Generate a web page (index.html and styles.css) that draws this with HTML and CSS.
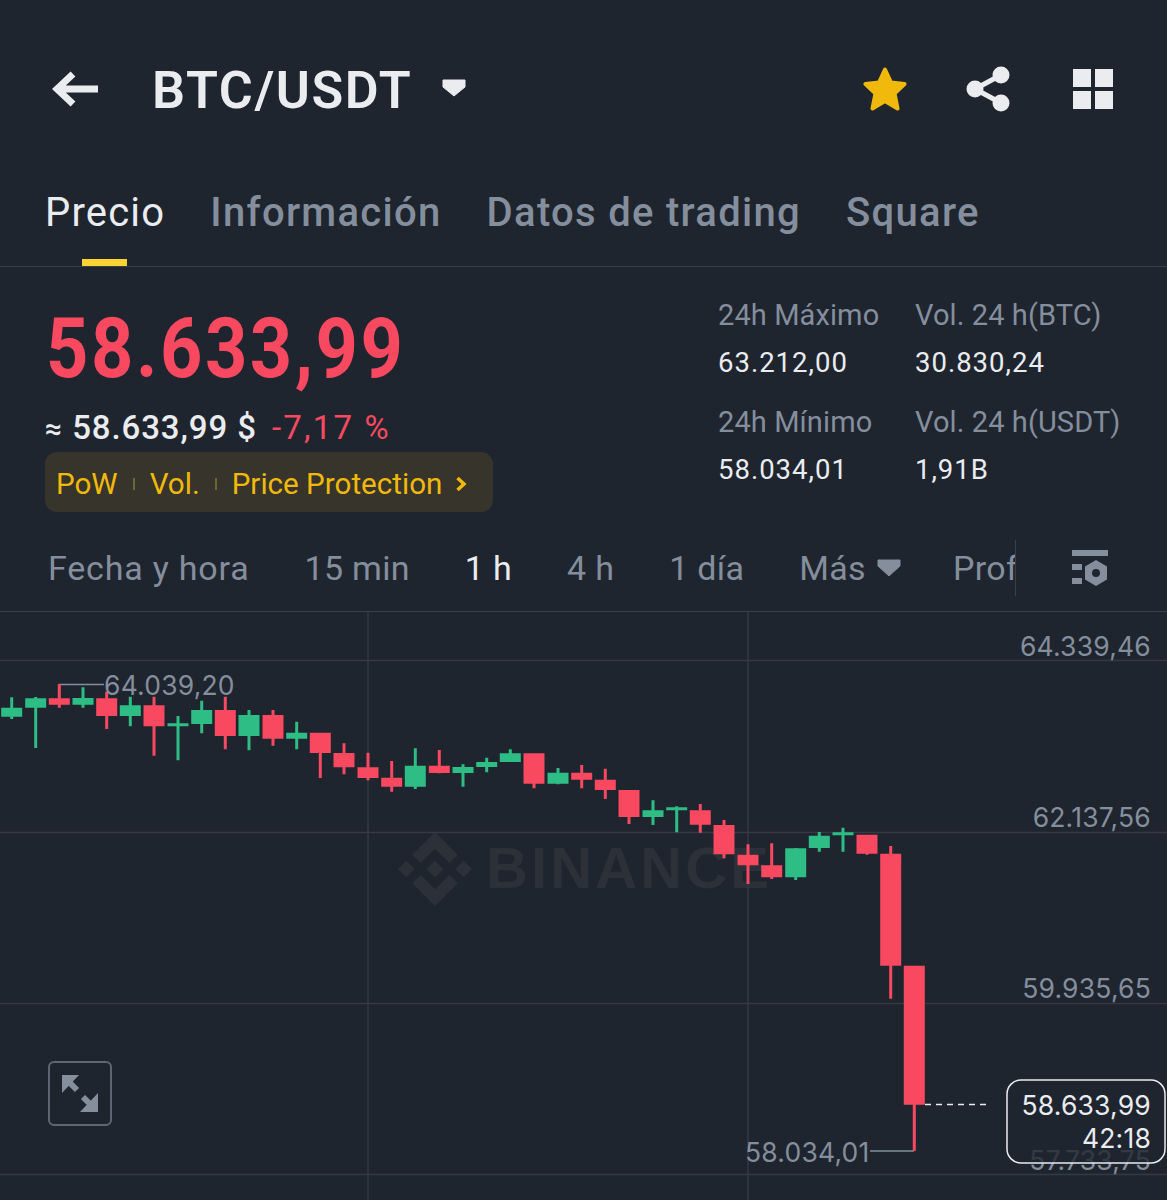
FILE: index.html
```html
<!DOCTYPE html>
<html lang="es">
<head>
<meta charset="utf-8">
<title>BTC/USDT</title>
<link rel="stylesheet" href="styles.css">
</head>
<body>
<main class="app">
  <header class="topbar">
    <svg class="back" viewBox="0 0 46 36" width="46" height="36"><path d="M46 18H6M21 3 5 18l16 15" fill="none" stroke="#eaecef" stroke-width="7"/></svg>
    <h1 class="pair">BTC/USDT</h1>
    <svg class="pair-caret" viewBox="0 0 24 18" width="24" height="18"><path d="M1 1h22v7L12 17 1 8z" fill="#eaecef" stroke="#eaecef" stroke-linejoin="round"/></svg>
    <div class="top-actions">
      <svg viewBox="0 0 44 45" width="44" height="45"><path d="M22 2.500 28 15.500 41.500 17 31.500 26.500 34.500 41.500 22 34 9.500 41.500 12.500 26.500 2.500 17 16 15.500z" fill="#f0b90b" stroke="#f0b90b" stroke-width="4" stroke-linejoin="round"/></svg>
      <svg class="share" viewBox="0 0 44 46" width="44" height="46"><path d="M35 9 9 23l26 14" fill="none" stroke="#eaecef" stroke-width="5"/><circle cx="35" cy="9" r="8.500" fill="#eaecef"/><circle cx="9" cy="23" r="8.500" fill="#eaecef"/><circle cx="35" cy="37" r="8.500" fill="#eaecef"/></svg>
      <svg class="apps" viewBox="0 0 40 40" width="40" height="40"><path d="M0 0h18v18H0zM22 0h18v18H22zM0 22h18v18H0zM22 22h18v18H22z" fill="#eaecef"/></svg>
    </div>
  </header>

  <nav class="tabs">
    <a class="tab tab-active">Precio</a>
    <a class="tab">Información</a>
    <a class="tab">Datos de trading</a>
    <a class="tab">Square</a>
  </nav>

  <section class="market">
    <div class="quote">
      <div class="price">58.633,99</div>
      <div class="fiat"><span class="approx">≈</span> 58.633,99 $ <span class="change">-7,17 %</span></div>
      <div class="tags">
        <span>PoW</span><i class="tag-sep"></i><span>Vol.</span><i class="tag-sep"></i><span>Price Protection</span>
        <svg class="tag-arrow" viewBox="0 0 12 16" width="12" height="16"><path d="M2.500 2 9 8l-6.500 6" fill="none" stroke="#f0b90b" stroke-width="3.500"/></svg>
      </div>
    </div>
    <dl class="stats">
      <div class="stat stat-a"><dt>24h Máximo</dt><dd>63.212,00</dd></div>
      <div class="stat stat-b"><dt>Vol. 24 h(BTC)</dt><dd>30.830,24</dd></div>
      <div class="stat stat-a"><dt>24h Mínimo</dt><dd>58.034,01</dd></div>
      <div class="stat stat-b"><dt>Vol. 24 h(USDT)</dt><dd>1,91B</dd></div>
    </dl>
  </section>

  <div class="intervals">
    <div class="interval-list">
      <span class="interval-first">Fecha y hora</span>
      <span>15 min</span>
      <span class="interval-active">1 h</span>
      <span>4 h</span>
      <span>1 día</span>
      <span class="more">Más<svg viewBox="0 0 24 18" width="24" height="18"><path d="M1 1h22v6L12 17 1 7z" fill="#848e9c" stroke="#848e9c" stroke-linejoin="round"/></svg></span>
      <span class="clip">Prof</span>
    </div>
    <svg class="chart-settings" viewBox="0 0 36 36" width="36" height="36"><path d="M0 0h36v6H0zM0 14h10v6H0zM0 28h10v6H0z" fill="#848e9c"/><path fill-rule="evenodd" d="M24 10l11 6.500v13L24 36l-11-6.500v-13zM24 19a4 4 0 1 0 0 8 4 4 0 0 0 0-8z" fill="#848e9c"/></svg>
  </div>

  <section class="chart">
    <svg class="chart-svg" viewBox="0 612 1167 588" width="1167" height="588">
      <svg class="wm-logo" x="398" y="832" width="74" height="74" viewBox="0 0 126.610 126.610"><path d="M38.730 53.200 63.320 28.620 87.920 53.220 102.220 38.910 63.320 0 24.430 38.900zM0 63.310 14.300 49.010 28.610 63.310 14.300 77.610zM63.310 48.980 77.830 63.300 63.320 77.820 48.800 63.300zM98.010 63.310 112.310 49.010 126.610 63.310 112.310 77.610zM87.910 73.400 63.320 98 38.730 73.410 24.410 87.710 63.320 126.610 102.220 87.700z"/></svg>
      <text class="wm-text" x="486" y="888">BINANCE</text>
      <path class="grid" d="M0 660.500H1167M0 832.500H1167M0 1003.500H1167M0 1174.500H1167M368 612V1200M748 612V1200"/>
      <text class="axis" x="1151" y="656">64.339,46</text>
      <text class="axis" x="1151" y="827">62.137,56</text>
      <text class="axis" x="1151" y="998">59.935,65</text>
      <text class="axis" x="1151" y="1170">57.733,75</text>
      <path class="marker" d="M59 684.500H104M870 1151H914"/>
      <path class="up" d="M10.200 697.300h3v21.700h-3zM1.200 707.700h21v9h-21zM34.200 697h3v51h-3zM25.200 698.300h21v9.400h-21zM81.500 687.300h3v20.400h-3zM72.500 698h21v6.700h-21zM128.800 696.700h3v29.600h-3zM119.800 705.300h21v10.700h-21zM176.500 716h3v44.300h-3zM167.500 723.300h21v3h-21zM200.200 700.700h3v32.600h-3zM191.200 710h21v14h-21zM247.500 710h3v40.300h-3zM238.500 715h21v21h-21zM295.200 721.700h3v27.600h-3zM286.200 732.700h21v6h-21zM413.800 748.300h3v40.700h-3zM404.800 765.700h21v21h-21zM461.500 764.300h3v22.400h-3zM452.500 767h21v6h-21zM485.200 757.700h3v14.600h-3zM476.200 762h21v5h-21zM508.800 749.300h3v12.700h-3zM499.800 753.300h21v8.700h-21zM556.500 768h3v16.300h-3zM547.500 772.700h21v11h-21zM651.500 800.300h3v24.700h-3zM642.500 810.300h21v6.700h-21zM675.200 806.300h3v26h-3zM666.200 807.300h21v3h-21zM794.200 848h3v32h-3zM785.200 848.300h21v29h-21zM817.800 832h3v19.700h-3zM808.800 835.700h21v12.300h-21zM841.500 827.700h3v24h-3zM832.500 832.300h21v3h-21z"/>
      <path class="down" d="M57.800 684h3v23.700h-3zM48.800 698.300h21v6.400h-21zM105.200 691.700h3v37.300h-3zM96.200 698.300h21v17.700h-21zM152.500 696.700h3v59h-3zM143.500 705.300h21v21h-21zM223.800 696.700h3v52.600h-3zM214.800 710h21v26h-21zM271.500 710h3v35.700h-3zM262.500 715h21v23.700h-21zM318.800 732.700h3v45.300h-3zM309.800 732.700h21v20.300h-21zM342.500 743.300h3v31h-3zM333.500 753h21v14.300h-21zM366.500 752.700h3v27.600h-3zM357.500 767.300h21v10.700h-21zM390.200 761h3v30.700h-3zM381.200 777.700h21v9h-21zM437.800 750h3v23.300h-3zM428.800 765.700h21v7.300h-21zM532.500 753.300h3v35h-3zM523.500 753.300h21v30.400h-21zM580.200 765h3v23.300h-3zM571.200 772.700h21v7h-21zM603.800 768.700h3v30.300h-3zM594.800 779.700h21v10.300h-21zM627.500 790h3v34h-3zM618.500 790h21v27h-21zM698.800 804h3v28.700h-3zM689.800 810.300h21v14.400h-21zM722.500 820h3v38.300h-3zM713.500 825h21v29.300h-21zM746.500 844.300h3v39.700h-3zM737.500 854.700h21v10.600h-21zM770.200 843.300h3v35.700h-3zM761.200 865.300h21v12h-21zM865.500 834.700h3v20h-3zM856.500 834.700h21v19h-21zM889.200 846h3v152.700h-3zM880.200 853.700h21v112h-21zM912.800 965.700h3v185.300h-3zM903.800 965.700h21v139h-21z"/>
      <text class="extreme" x="104" y="695">64.039,20</text>
      <text class="extreme" x="745" y="1162">58.034,01</text>
      <path class="last-line" d="M925 1104.500H991"/>
      <rect class="last-box" x="1007" y="1080" width="158" height="83" rx="14"/>
      <text class="last-text" x="1151" y="1115">58.633,99</text>
      <text class="last-text" x="1151" y="1148">42:18</text>
    </svg>
    <button class="expand" aria-label="Expand">
      <svg viewBox="0 0 36 37" width="36" height="37"><path d="M0 0h17L0 18zM36 37H18L36 18z" fill="#848e9c"/><path d="M8 8l7 7M21 22l7 7" stroke="#848e9c" stroke-width="6" fill="none"/></svg>
    </button>
  </section>
</main>
</body>
</html>
```

FILE: styles.css
```css
* { box-sizing: border-box; }
html, body { margin: 0; padding: 0; background: #1f252f; }
body { width: 1167px; height: 1200px; overflow: hidden; font-family: "Roboto", "Noto Sans", sans-serif; color: #eaecef; }
.app { display: flex; flex-direction: column; height: 1200px; }

.topbar { display: flex; align-items: center; height: 98px; margin-top: 40px; padding: 0 54px 0 52px; }
.back { flex: none; }
.pair { margin: 3px 0 0 54px; font-size: 52px; font-weight: 600; line-height: 98px; letter-spacing: 1.600px; }
.pair-caret { margin: 0 0 2px 30px; }
.top-actions { display: flex; align-items: center; margin-left: auto; gap: 59px; }
.top-actions .apps { margin-left: 4px; }

.tabs { display: flex; height: 129px; padding: 36px 0 0 45px; gap: 45px; border-bottom: 1px solid #3a404b; }
.tab { position: relative; height: 92px; font-size: 40px; font-weight: 500; line-height: 78px; color: #848e9c; letter-spacing: 1.300px; }
.tab-active { color: #eaecef; font-weight: 400; letter-spacing: 1.200px; }
.tab-active::after { content: ""; position: absolute; left: 37px; width: 45px; bottom: 0; height: 7px; background: #fcd535; }

.market { display: flex; justify-content: space-between; height: 258px; padding: 0 46px 0 45px; }
.price { font-size: 84px; font-weight: 700; line-height: 100px; margin: 32px 0 0 1px; color: #f84960; letter-spacing: 2.900px; transform: scaleX(.88); transform-origin: left center; white-space: nowrap; }
.fiat { margin-top: 7px; font-size: 33px; font-weight: 500; line-height: 44px; white-space: nowrap; letter-spacing: .9px; }
.approx { font-size: 30px; }
.change { margin-left: 6px; color: #f84960; font-weight: 400; letter-spacing: 2.200px; }
.tags { display: flex; align-items: center; margin-top: 1px; width: 448px; height: 60px; padding: 3px 0 0 11px; background: #37342b; border-radius: 12px; color: #f0b90b; font-size: 29.600px; }
.tag-sep { width: 2px; height: 12px; margin: 0 15px; background: #6e6636; }
.tag-arrow { margin-left: 13px; }

.stats { display: grid; grid-template-columns: 197px 206px; margin: 0; padding-top: 26px; grid-auto-rows: 107px; }
.stat dt { font-size: 29px; line-height: 44px; color: #848e9c; white-space: nowrap; letter-spacing: .1px; }
.stat dd { margin: 4px 0 0; font-size: 27.500px; line-height: 44px; white-space: nowrap; letter-spacing: 1px; }

.intervals { display: flex; align-items: center; height: 87px; padding: 0 0 0 48px; border-bottom: 1px solid #3a404b; }
.interval-list { display: flex; align-items: center; gap: 55px; font-size: 34px; color: #848e9c; width: 968px; white-space: nowrap; overflow: hidden; height: 56px; border-right: 1px solid #3a404b; letter-spacing: .3px; }
.interval-first { letter-spacing: .8px; }
.interval-active { color: #eaecef; }
.more { display: flex; align-items: center; gap: 11px; }
.clip { margin-left: -3px; }
.chart-settings { margin: 0 0 0 56px; }

.chart { position: relative; flex: 1; overflow: hidden; }
.chart-svg { display: block; }
.grid { stroke: #343a45; stroke-width: 1.500; fill: none; }
.up { fill: #2ebd85; }
.down { fill: #f84960; }
.marker { stroke: #848e9c; stroke-width: 1.500; fill: none; }
.axis { font-family: "Inter", sans-serif; font-size: 26.500px; fill: #848e9c; text-anchor: end; letter-spacing: .2px; }
.extreme { font-family: "Inter", sans-serif; font-size: 26.500px; fill: #848e9c; letter-spacing: .2px; }
.wm-logo { fill: #2b3039; }
.wm-text { font-family: "Liberation Sans", sans-serif; font-weight: 700; font-size: 58px; fill: #2b3039; letter-spacing: 3.100px; }
.last-line { stroke: #eaecef; stroke-width: 1.500; stroke-dasharray: 6 5; fill: none; }
.last-box { fill: #1f252f; fill-opacity: .8; stroke: #eaecef; stroke-width: 1.500; }
.last-text { font-family: "Inter", sans-serif; font-size: 26.500px; fill: #eaecef; text-anchor: end; letter-spacing: .2px; }
.expand { position: absolute; left: 48px; top: 449px; width: 64px; height: 65px; display: flex; align-items: center; justify-content: center; padding: 0; background: none; border: 2px solid #5e6673; border-radius: 6px; }
```
